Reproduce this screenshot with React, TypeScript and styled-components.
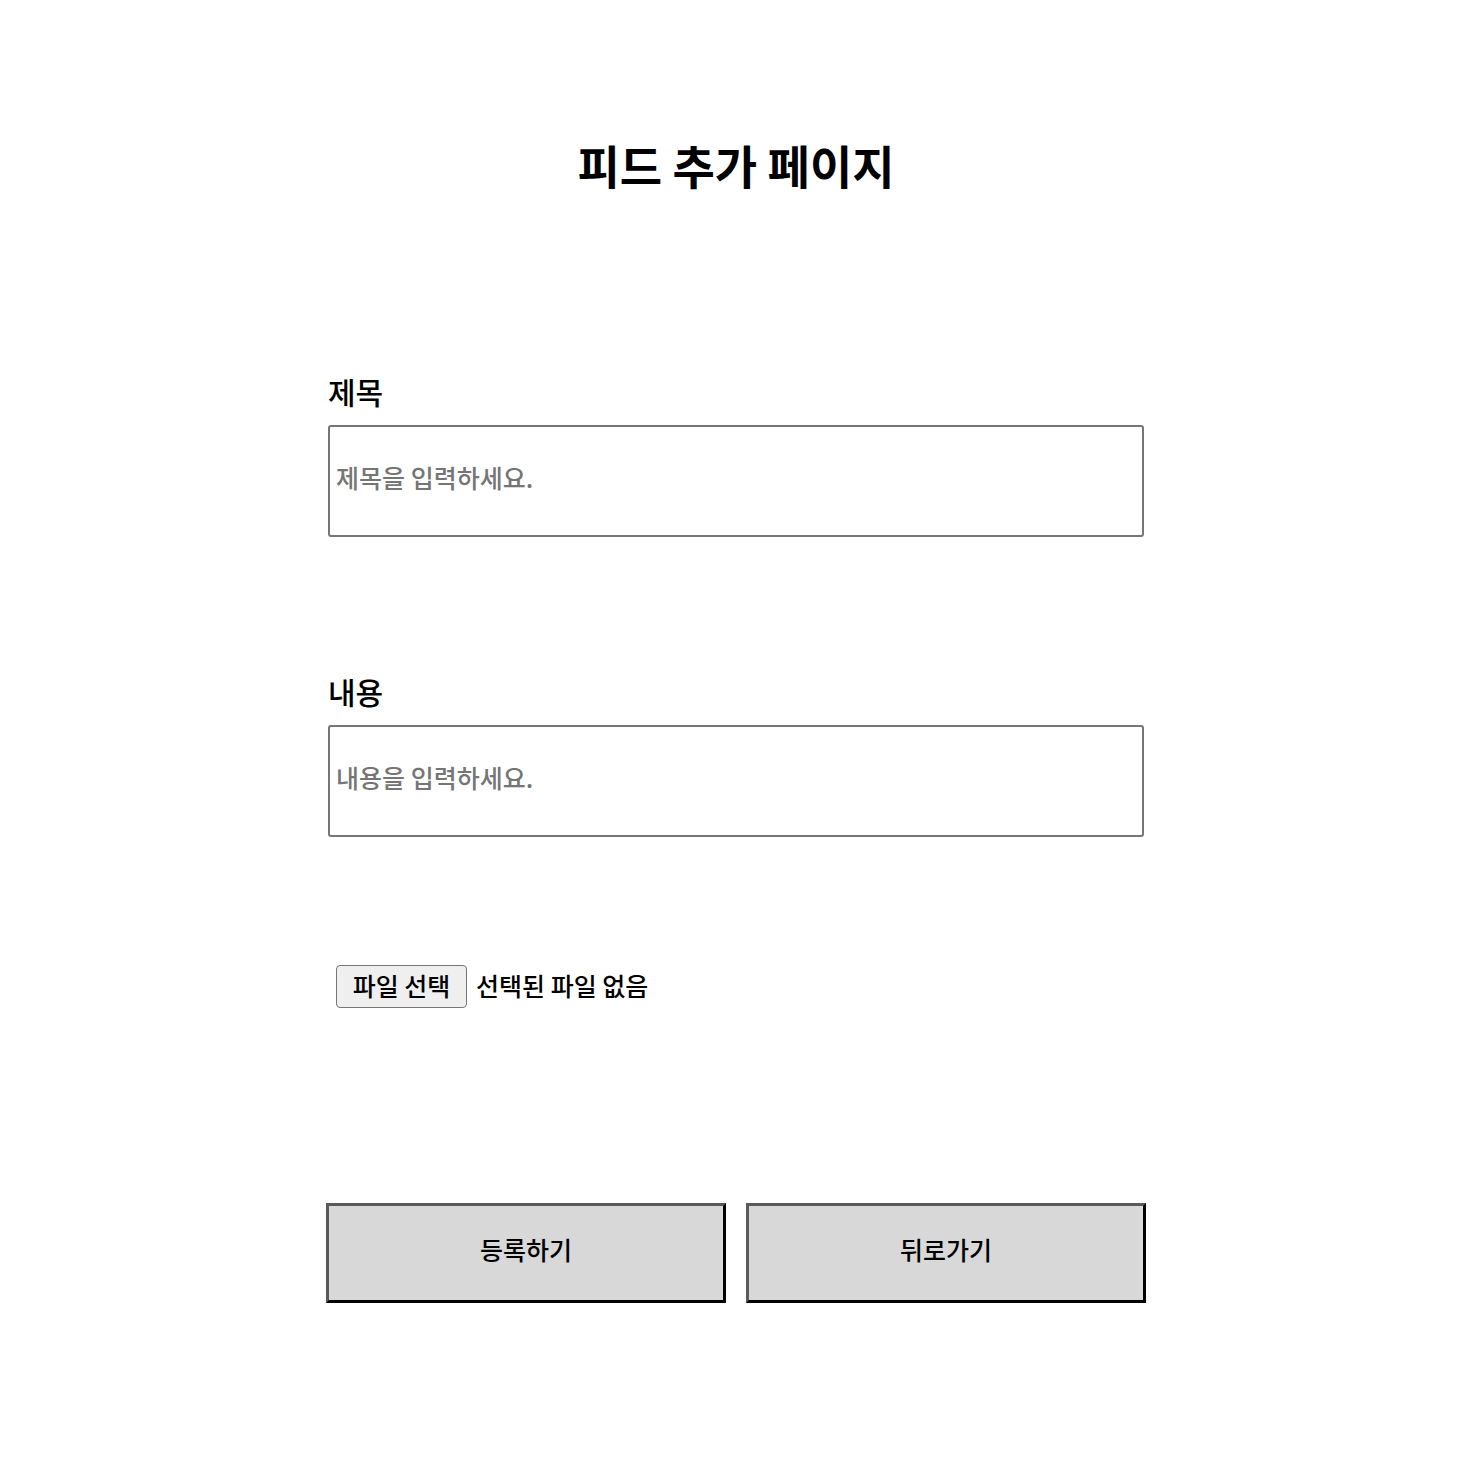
import React, { useState } from "react";
import styled, { createGlobalStyle } from "styled-components";

const Global = createGlobalStyle`
  html, body { margin: 0; padding: 0; background: #fff; }
  body { font-family: "Noto Sans CJK KR", "Noto Sans", sans-serif; color: #000; }
`;

const FONT = `"Noto Sans CJK KR", "Noto Sans", sans-serif`;

const Page = styled.div`
  padding-left: 8px;
  display: flex;
  flex-direction: column;
  align-items: center;
`;

const Title = styled.h1`
  margin: 132px 0 0;
  font-size: 46px;
  line-height: 64px;
  font-weight: 700;
  text-align: center;
`;

const Form = styled.form`
  width: 816px;
  display: flex;
  flex-direction: column;
  margin-top: 177px;
`;

const Field = styled.div<{ $gap: number }>`
  display: flex;
  flex-direction: column;
  margin-bottom: ${(p) => p.$gap}px;
`;

const Label = styled.label`
  font-size: 30px;
  line-height: 36px;
  font-weight: 500;
  margin-bottom: 16px;
`;

const TextInput = styled.input`
  box-sizing: border-box;
  width: 816px;
  height: 112px;
  border: 2px solid #767676;
  border-radius: 3px;
  padding: 0 6px 8px;
  font-family: ${FONT};
  font-size: 25px;
  font-weight: 500;
  color: #000;
  outline: none;
  &::placeholder { color: #757575; }
`;

const FileRow = styled.div`
  display: flex;
  align-items: center;
  gap: 9px;
  margin-left: 8px;
  height: 43px;
  font-size: 25px;
  font-weight: 500;
`;

const HiddenFile = styled.input`
  display: none;
`;

const FileButton = styled.label`
  box-sizing: border-box;
  display: flex;
  align-items: center;
  justify-content: center;
  width: 131px;
  height: 43px;
  padding-bottom: 4px;
  background: #efefef;
  border: 1.5px solid #767676;
  border-radius: 4px;
  font-size: 25px;
  cursor: default;
`;

const FileName = styled.span`
  padding-bottom: 4px;
`;

const Buttons = styled.div`
  display: flex;
  gap: 20px;
  margin: 195px -2px 0;
`;

const Button = styled.button`
  box-sizing: border-box;
  width: 400px;
  height: 100px;
  background: #d8d8d8;
  border-style: solid;
  border-width: 3px;
  border-color: #5a5a5a #000 #000 #5a5a5a;
  font-family: ${FONT};
  font-size: 25px;
  font-weight: 500;
  color: #000;
  padding: 0 0 8px;
`;

export default function App() {
  const [fileName, setFileName] = useState("");
  return (
    <>
      <Global />
      <Page>
        <Title>피드 추가 페이지</Title>
        <Form onSubmit={(e) => e.preventDefault()}>
          <Field $gap={136}>
            <Label htmlFor="title">제목</Label>
            <TextInput id="title" placeholder="제목을 입력하세요." />
          </Field>
          <Field $gap={128}>
            <Label htmlFor="content">내용</Label>
            <TextInput id="content" placeholder="내용을 입력하세요." />
          </Field>
          <FileRow>
            <FileButton htmlFor="file">파일 선택</FileButton>
            <HiddenFile
              id="file"
              type="file"
              onChange={(e) => setFileName(e.target.files?.[0]?.name ?? "")}
            />
            <FileName>{fileName || "선택된 파일 없음"}</FileName>
          </FileRow>
          <Buttons>
            <Button type="submit">등록하기</Button>
            <Button type="button">뒤로가기</Button>
          </Buttons>
        </Form>
      </Page>
    </>
  );
}
